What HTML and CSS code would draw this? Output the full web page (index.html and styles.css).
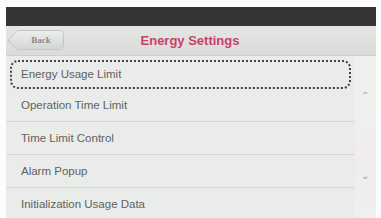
FILE: index.html
```html
<!DOCTYPE html>
<html lang="en">
<head>
    <meta charset="UTF-8">
    <title>Energy Settings</title>
    <link rel="stylesheet" href="styles.css">
</head>
<body>
    <div class="device">
        <div class="status-bar"></div>
        <div class="header">
            <button class="back">Back</button>
            <h1>Energy Settings</h1>
        </div>
        <div class="content">
            <ul class="menu">
                <li class="focused"><span>Energy Usage Limit</span></li>
                <li><span>Operation Time Limit</span></li>
                <li><span>Time Limit Control</span></li>
                <li><span>Alarm Popup</span></li>
                <li><span>Initialization Usage Data</span></li>
            </ul>
            <div class="scroll">
                <span class="arrow up">&#8963;</span>
                <span class="arrow down">&#8964;</span>
            </div>
        </div>
    </div>
</body>
</html>
```

FILE: styles.css
```css
body {
    margin: 0;
    background-color: #fdfdfd;
    font-family: "Liberation Sans", Arial, sans-serif;
}
.device {
    margin: 7px 0 0 6px;
    width: 370px;
    height: 211px;
    overflow: hidden;
    background-color: #e9ece9;
}
.status-bar {
    height: 19px;
    background-color: #353535;
}
.header {
    position: relative;
    height: 29px;
    display: flex;
    align-items: center;
    justify-content: center;
    background: linear-gradient(#e4e6e4, #d9dcd9);
    border-bottom: 1px solid #cdd0cd;
}
.back {
    position: absolute;
    left: 11px;
    top: 4px;
    width: 47px;
    height: 20px;
    padding: 0 0 0 2px;
    border: 1px solid #c4c6c4;
    border-left: none;
    border-radius: 0 5px 5px 0;
    background: linear-gradient(#eceeec, #d4d6d4);
    color: #8a8a8a;
    font-family: "Liberation Serif", serif;
    font-size: 9px;
    font-weight: bold;
}
.back::before {
    content: "";
    position: absolute;
    left: -7px;
    top: 2px;
    width: 14px;
    height: 14px;
    transform: rotate(45deg);
    border-left: 1px solid #c4c6c4;
    border-bottom: 1px solid #c4c6c4;
    border-radius: 0 0 0 4px;
    background: linear-gradient(135deg, #eceeec, #d4d6d4);
    z-index: -1;
}
.back {
    z-index: 0;
}
.header h1 {
    margin: 0 0 0 -2px;
    font-size: 13px;
    font-weight: bold;
    color: #c9406a;
}
.content {
    display: flex;
}
.menu {
    list-style: none;
    margin: 0;
    padding: 0;
    width: 349px;
}
.menu li {
    height: 33px;
    display: flex;
    align-items: center;
    padding: 0 4px;
    border-bottom: 1px solid #d6d9d6;
    box-sizing: border-box;
    color: #626262;
    font-size: 11.5px;
}
.menu li span {
    padding-left: 11px;
}
.menu li.focused {
    border-bottom: none;
    padding-top: 3px;
}
.menu li.focused span {
    flex: 1;
    height: 25px;
    line-height: 25px;
    border: 2px dotted #444;
    border-radius: 8px;
    padding-left: 9px;
}
.scroll {
    position: relative;
    width: 21px;
    height: 163px;
    background: linear-gradient(#eef0ee 40%, #f1ecee 60%, #eef0ee);
}
.arrow {
    position: absolute;
    left: 6px;
    color: #a0a0a0;
    font-size: 10px;
}
.arrow.up {
    top: 34px;
}
.arrow.down {
    top: 114px;
}
```
